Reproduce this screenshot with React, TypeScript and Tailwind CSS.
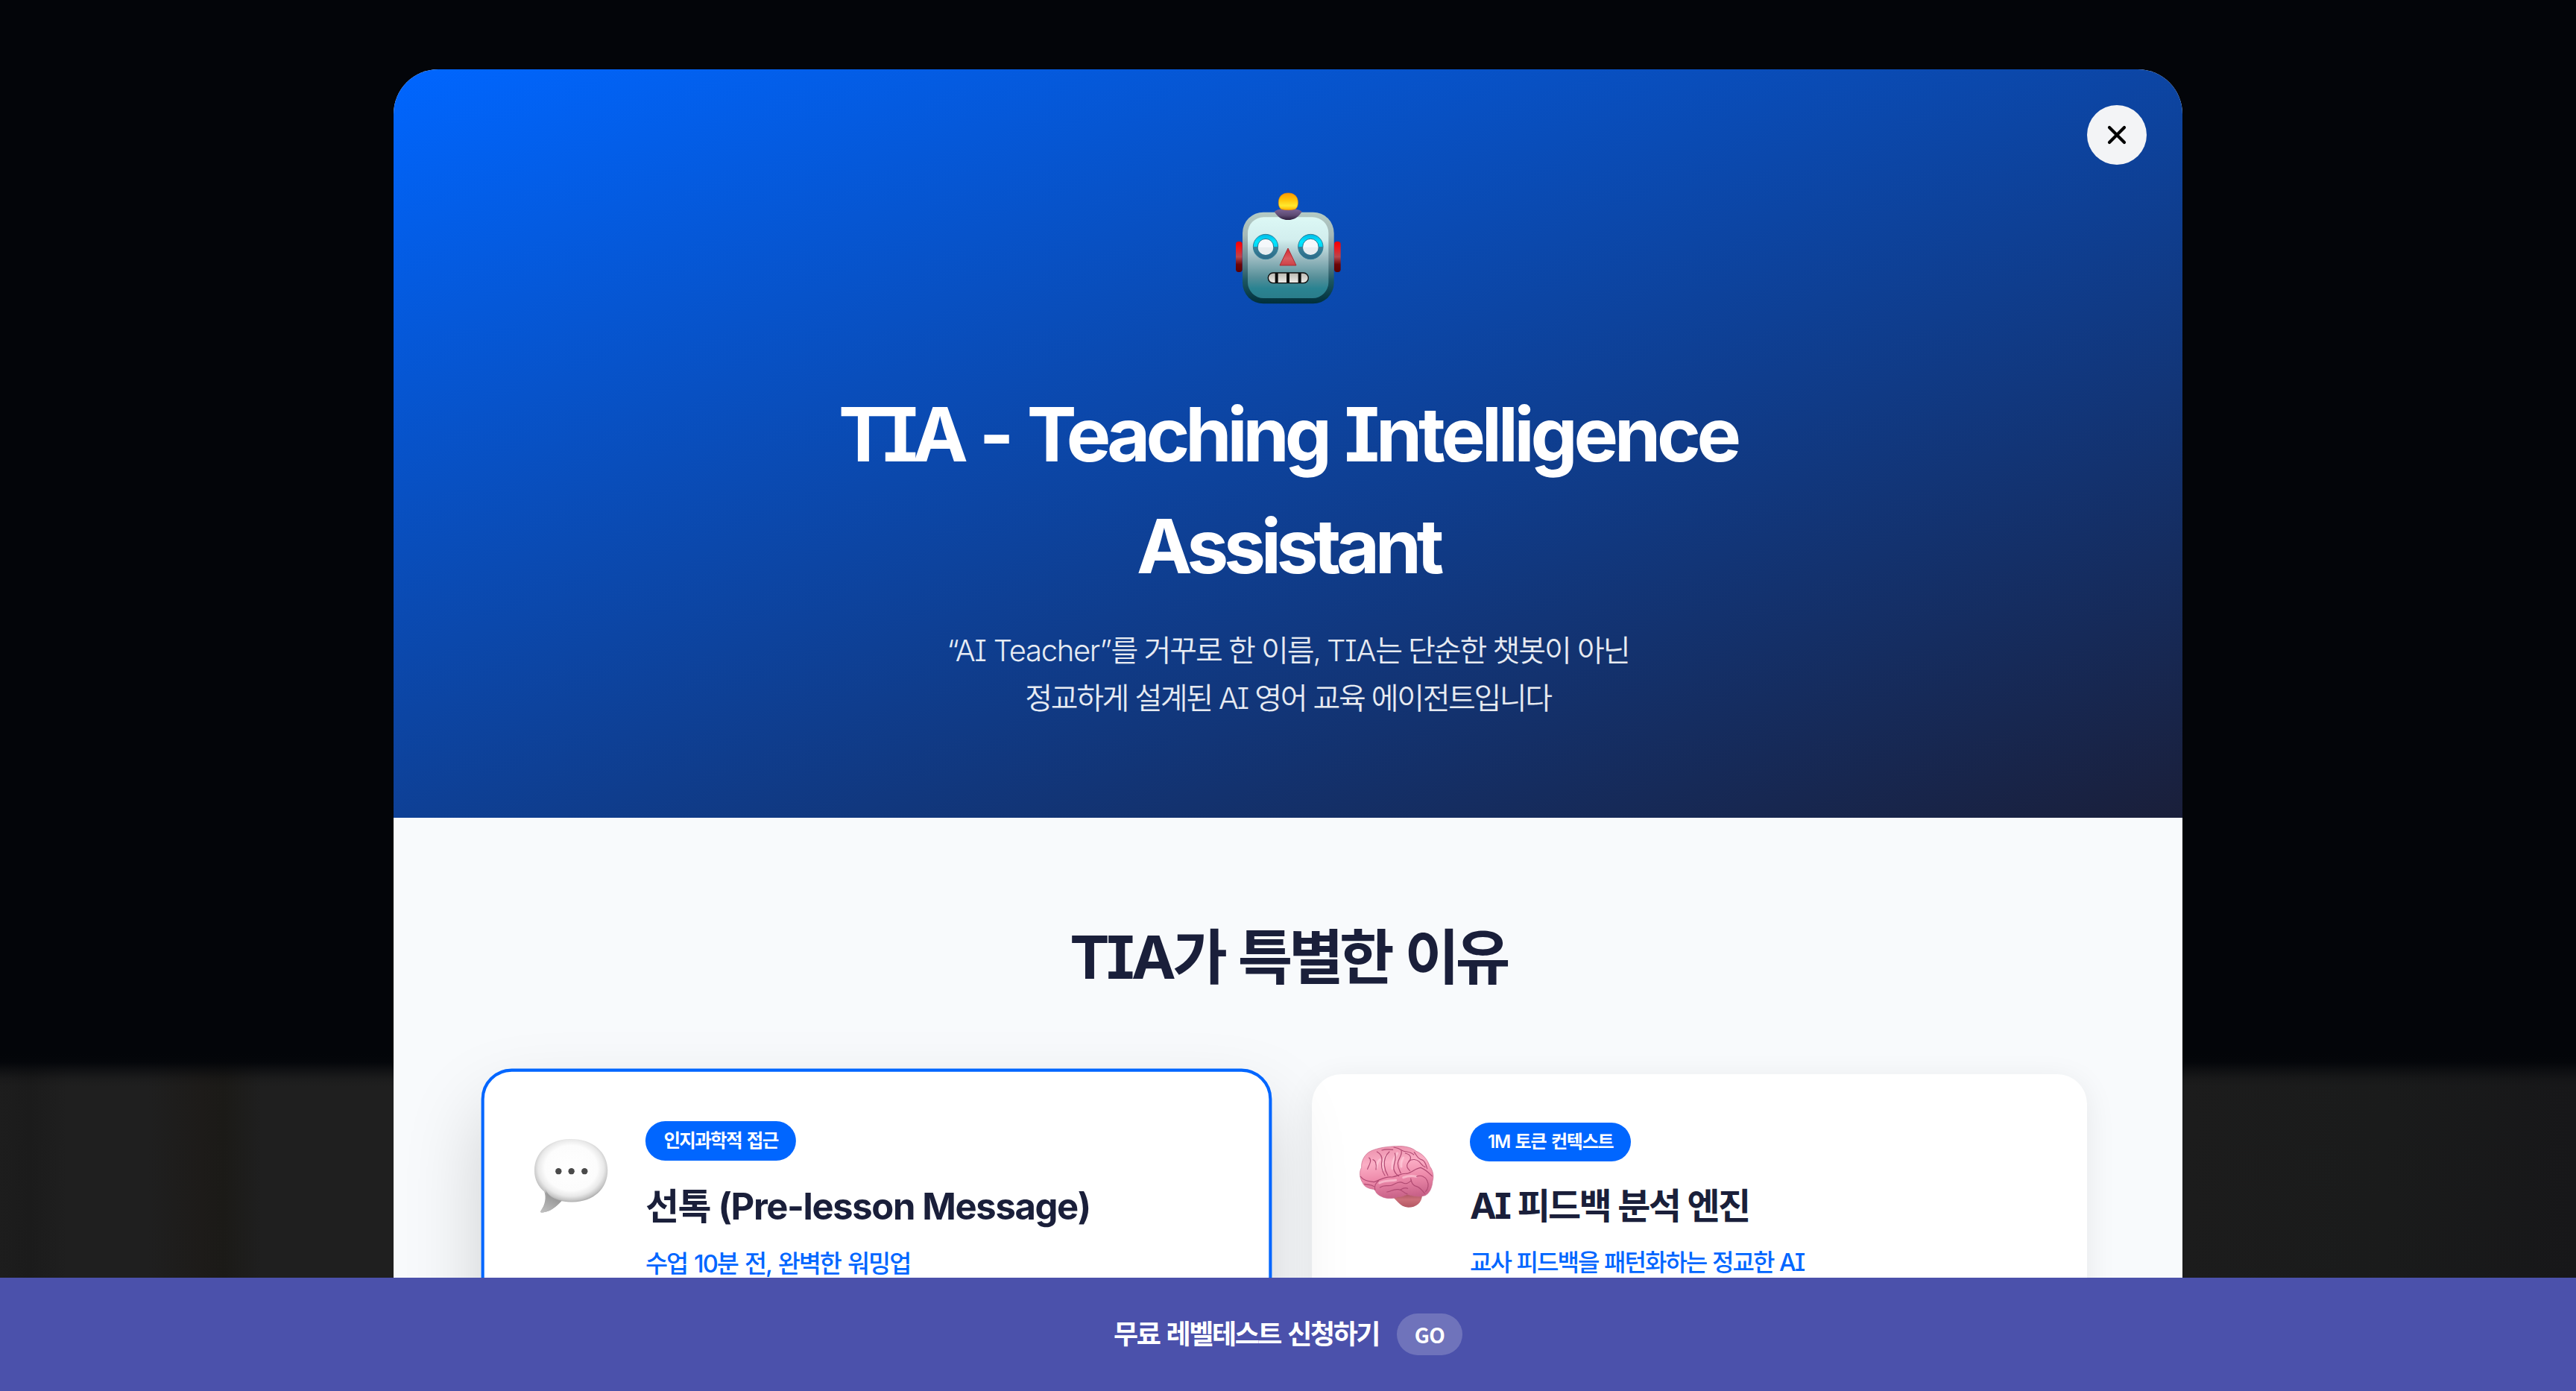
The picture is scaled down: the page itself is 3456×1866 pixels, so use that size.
import type { ReactNode } from "react";
import { X } from "lucide-react";

function RobotIcon() {
  return (
    <svg viewBox="0 0 600 570" className="h-[190px] w-[200px]" aria-hidden="true">
      <defs>
        <linearGradient id="rb-frame" x1="0" y1="0" x2="0" y2="1">
          <stop offset="0" stopColor="#b4cbc4" />
          <stop offset="0.25" stopColor="#a5b9b8" />
          <stop offset="0.5" stopColor="#6d8a92" />
          <stop offset="0.75" stopColor="#1b5560" />
          <stop offset="1" stopColor="#002f3a" />
        </linearGradient>
        <linearGradient id="rb-face" x1="0" y1="0" x2="0" y2="1">
          <stop offset="0" stopColor="#dcf8f5" />
          <stop offset="0.28" stopColor="#d2eeee" />
          <stop offset="0.5" stopColor="#9dbcc2" />
          <stop offset="0.75" stopColor="#548e98" />
          <stop offset="0.88" stopColor="#2a8391" />
          <stop offset="1" stopColor="#2a7d8b" />
        </linearGradient>
        <linearGradient id="rb-ear" x1="0" y1="0" x2="0" y2="1">
          <stop offset="0" stopColor="#f50000" />
          <stop offset="0.2" stopColor="#f0141a" />
          <stop offset="0.5" stopColor="#b8464c" />
          <stop offset="0.75" stopColor="#6b0508" />
          <stop offset="1" stopColor="#5c0000" />
        </linearGradient>
        <linearGradient id="rb-ball" x1="0" y1="0" x2="0" y2="1">
          <stop offset="0" stopColor="#ff9a00" />
          <stop offset="0.4" stopColor="#ffc40a" />
          <stop offset="0.75" stopColor="#ffe92e" />
          <stop offset="1" stopColor="#ffb300" />
        </linearGradient>
        <linearGradient id="rb-cap" x1="0" y1="0" x2="0" y2="1">
          <stop offset="0" stopColor="#7d6596" />
          <stop offset="0.6" stopColor="#5c4a72" />
          <stop offset="1" stopColor="#2c1c3c" />
        </linearGradient>
        <linearGradient id="rb-eye" x1="0" y1="0" x2="0" y2="1">
          <stop offset="0" stopColor="#00b8e6" />
          <stop offset="0.3" stopColor="#00e8ff" />
          <stop offset="0.5" stopColor="#00d5f5" />
          <stop offset="0.51" stopColor="#3a8299" />
          <stop offset="1" stopColor="#2c6a88" />
        </linearGradient>
        <linearGradient id="rb-nose" x1="0" y1="0" x2="0" y2="1">
          <stop offset="0" stopColor="#d9252d" />
          <stop offset="0.6" stopColor="#d85c60" />
          <stop offset="1" stopColor="#cf4046" />
        </linearGradient>
        <linearGradient id="rb-tooth" x1="0" y1="0" x2="0" y2="1">
          <stop offset="0" stopColor="#b9b7b0" />
          <stop offset="1" stopColor="#efeeea" />
        </linearGradient>
      </defs>
      <rect x="90" y="252" width="26" height="123" rx="11" fill="url(#rb-ear)" />
      <rect x="486" y="252" width="26" height="123" rx="11" fill="url(#rb-ear)" />
      <rect x="117" y="134" width="368" height="368" rx="84" fill="url(#rb-frame)" />
      <rect x="138" y="154" width="325" height="326" rx="64" fill="url(#rb-face)" />
      <path d="M245 131c16-11 35-11 55-11s40 0 56 11c-12 22-32 34-56 34s-43-12-55-34z" fill="url(#rb-cap)" />
      <path d="M262 95c0-24 15-38 39-38s39 14 39 38c0 14-5 25-13 27-16 4-36 4-52 0-8-2-13-13-13-27z" fill="url(#rb-ball)" stroke="#f08a00" strokeWidth="2" />
      {[210, 391].map((cx) => (
        <g key={cx}>
          <circle cx={cx} cy="273" r="50" fill="url(#rb-eye)" stroke="#2f7f98" strokeWidth="3" />
          <circle cx={cx} cy="273" r="32" fill="#f5f8fb" stroke="#1f7792" strokeWidth="3" />
          <path d={`M${cx - 31} 275a31 31 0 0 0 62 0z`} fill="#e8edf0" />
        </g>
      ))}
      <path d="M300 279l33 69h-66z" fill="url(#rb-nose)" stroke="#a92b31" strokeWidth="3" strokeLinejoin="round" />
      <rect x="220" y="378" width="162" height="41" rx="20.500" fill="url(#rb-tooth)" stroke="#0c0c0c" strokeWidth="4" />
      <path d="M254 378v41M300 378v41M347 378v41" stroke="#0c0c0c" strokeWidth="12" />
    </svg>
  );
}

function BubbleIcon() {
  return (
    <svg viewBox="27 0 306 360" className="mt-3 h-[117.6px] w-[100px] shrink-0" aria-hidden="true">
      <defs>
        <radialGradient id="bb-body" cx="0.5" cy="0.46" r="0.56">
          <stop offset="0" stopColor="#ffffff" />
          <stop offset="0.64" stopColor="#fcfcfc" />
          <stop offset="0.8" stopColor="#e9e9e9" />
          <stop offset="0.92" stopColor="#c4c4c4" />
          <stop offset="1" stopColor="#9c9c9c" />
        </radialGradient>
        <linearGradient id="bb-tail" x1="0.6" y1="0" x2="0.1" y2="1">
          <stop offset="0" stopColor="#9a9a9a" stopOpacity="0" />
          <stop offset="0.3" stopColor="#9a9a9a" />
          <stop offset="1" stopColor="#c0c0c0" />
        </linearGradient>
      </defs>
      <path d="M72 248c10 26 4 56-13 79-4 6 0 8 8 7 30-3 54-22 76-47z" fill="#a6a6a6" />
      <path d="M181 38c86 0 147 52 147 126 0 75-58 128-140 128-14 0-30-1-45-4-20-4-50-16-68-36-26-20-42-50-42-86C33 88 96 38 181 38z" fill="url(#bb-body)" />
      <path d="M76 240c10 28 4 62-17 87-4 6 0 8 8 7 30-3 54-22 76-47-30-6-50-16-67-47z" fill="url(#bb-tail)" />
      <g fill="#4a4a4a">
        <circle cx="130" cy="168" r="12.500" />
        <circle cx="182" cy="168" r="12.500" />
        <circle cx="235" cy="168" r="12.500" />
      </g>
    </svg>
  );
}

function BrainIcon() {
  return (
    <svg viewBox="30 0 300 315" className="mt-5 h-[105px] w-[100px] shrink-0" aria-hidden="true">
      <defs>
        <linearGradient id="br-body" x1="0.4" y1="0" x2="0.55" y2="1">
          <stop offset="0" stopColor="#ec93ae" />
          <stop offset="0.3" stopColor="#fbaec5" />
          <stop offset="0.6" stopColor="#ee8bab" />
          <stop offset="1" stopColor="#c65f86" />
        </linearGradient>
        <linearGradient id="br-stem" x1="0" y1="0" x2="0" y2="1">
          <stop offset="0" stopColor="#9c4656" />
          <stop offset="0.5" stopColor="#cc6f79" />
          <stop offset="1" stopColor="#b35763" />
        </linearGradient>
      </defs>
      <path d="M160 240c20 12 30 42 66 44 32 0 54-18 56-48l-60-16z" fill="url(#br-stem)" />
      <path d="M180 38c30-2 60 4 78 20 26 10 46 34 54 60 14 18 18 40 12 60-2 26-12 50-30 58-24 8-50 2-72-4-14 6-24 10-38 10-20 8-48 8-66-2-14-6-24-16-26-28-22-2-44-10-50-28-12-18-14-44-4-60-2-26 12-54 36-66 28-14 74-20 106-20z" fill="url(#br-body)" stroke="#c8688a" strokeWidth="2" />
      <g fill="none" stroke="#ffd3df" strokeWidth="9" strokeLinecap="round" opacity="0.6">
        <path d="M138 76c-14 16-16 36-14 58M182 66c-16 22-22 40-20 62M112 92c-8 8-14 20-14 32M206 84c-8 12-10 22-8 36M110 186c20-12 46-8 66-12M206 164c20-8 34-8 52-4" />
      </g>
      <g fill="none" stroke="#b04a72" strokeWidth="3.500" strokeLinecap="round" strokeLinejoin="round">
        <path d="M34 160c14 18 34 18 54 22 24-8 46-24 72-20 22-2 36-16 60-14 20-4 36-22 56-24 18 6 34 22 46 34" />
        <path d="M92 214c-2-16 0-26 14-36M50 190c14 4 26 0 38 10" />
        <path d="M68 84c14 10 0 30-6 46M100 60c14 8 22 20 20 36-4 14-2 40 12 60M84 92c14 4 14 24 12 40" />
        <path d="M150 60c-18 16-22 36-20 56s8 30 14 40M172 66c10 22-8 44-4 66 4 14 10 20 20 26" />
        <path d="M198 56c6 18-14 32-14 52 0 18 6 26 12 38M214 66c22 6 30 18 10 40-8 14 0 22 8 30" />
        <path d="M168 42c14 2 26 8 36 14 14 6 30 2 44 16M120 54c12-4 30-4 44-2M250 62c12 16 14 26 34 32 12 8 14 22 18 34M228 98c14-10 32-8 42 2 8 8 12 18 24 22" />
        <path d="M112 204c18-14 34-2 50-10s30-16 44-8c10 6 24-2 32-10M140 222c18-2 24-12 44-10 18-2 20 14 38 18M236 168c4 18 6 26 24 32 14 4 24 18 32 28M260 160c16-8 34 0 42 16s4 34-6 44M196 212c10-6 20-8 28-4" />
      </g>
    </svg>
  );
}

function Feature(props: {
  icon: ReactNode;
  badge: ReactNode;
  title: ReactNode;
  subtitle: ReactNode;
  className: string;
}) {
  return (
    <article className={`flex h-[738px] gap-12 rounded-[40px] bg-white p-16 whitespace-nowrap ${props.className}`}>
      {props.icon}
      <div className="flex flex-col items-start pt-px">
        <div className="rounded-[26px] bg-[#0066ff] px-6 py-2 text-[24px] leading-[36px] font-semibold text-white">
          {props.badge}
        </div>
        <h3 className="mt-6 text-[48px] leading-[72px] font-[650] text-[#1a1f3a]">{props.title}</h3>
        <p className="mt-4 text-[32px] leading-[48px] font-medium text-[#0066ff]">{props.subtitle}</p>
      </div>
    </article>
  );
}

export default function App() {
  return (
    <div className="relative flex h-[1866px] w-[3456px] flex-col overflow-hidden bg-[#030509] font-[Inter,'Noto_Sans_CJK_KR',sans-serif] [font-feature-settings:'cv08']">
      <div className="absolute inset-0 flex flex-col">
        <div className="h-[1414px] bg-[#030509]" />
        <div className="grow bg-[linear-gradient(to_right,#1d1d1d_0px,#1b1b1b_40px,#1f1f1f_90px,#1f1f1f_200px,#1d1b19_270px,#1b1a17_300px,#1f1f1f_350px,#1f1f1f_528px,#1c1c1c_2928px,#1a1b1b_3200px,#171719_3456px)]">
          <div className="h-[44px] bg-[linear-gradient(to_bottom,#030509_0%,#030509f0_25%,#03050980_50%,#03050920_75%,transparent_100%)]" />
        </div>
      </div>

      <main className="relative flex h-[1714px] justify-center overflow-hidden pt-[93px]">
        <section className="relative h-[1900px] w-[2400px] overflow-hidden rounded-[60px] bg-[#f8fafc]">
          <button
            aria-label="닫기"
            className="absolute top-12 right-12 flex size-20 items-center justify-center rounded-full bg-[#f3f4f6] text-black"
          >
            <X size={40} strokeWidth={2.5} />
          </button>

          <header className="flex h-[1004px] flex-col items-center bg-[linear-gradient(160deg,#0066ff_0%,#1a1f3a_100%)] pt-[147px] text-center text-white">
            <RobotIcon />
            <h1 className="mt-[78px] text-[100px] leading-[150px] font-bold">
              <span className="block tracking-[-5.2px] [word-spacing:4px]">
                <span className="tracking-[-7.6px]">TIA</span> - <span className="tracking-[-6px]">Teaching</span> Intelligence
              </span>
              <span className="block tracking-[-6.3px]">Assistant</span>
            </h1>
            <p className="mt-[33px] text-[40px] leading-[64px] font-[350] text-white/90">
              <span className="block tracking-[-2.05px]">
                <span className="tracking-[-1.3px]">“AI Teacher”</span>를 거꾸로 한 이름,{" "}
                <span className="tracking-[-1.3px]">TIA</span>는 단순한 챗봇이 아닌
              </span>
              <span className="block tracking-[-2.4px] [word-spacing:0.6px]">정교하게 설계된 AI 영어 교육 에이전트입니다</span>
            </p>
          </header>

          <div className="px-32 pt-[127px]">
            <h2 className="text-center text-[80px] leading-[120px] font-[650] tracking-[-5.5px] text-[#1a1f3a] [word-spacing:6px]">
              <span className="tracking-[-4.4px]">TIA</span>가 특별한 이유
            </h2>
            <div className="mt-[97px] grid grid-cols-2 gap-16">
              <Feature
                className="scale-[1.02] border-4 border-[#0066ff] shadow-[0_50px_100px_rgba(0,0,0,0.17)]"
                icon={<BubbleIcon />}
                badge={<span className="tracking-[-1.6px] [word-spacing:2.4px]">인지과학적 접근</span>}
                title={<span className="tracking-[-1.35px]">선톡 (Pre-lesson Message)</span>}
                subtitle={<span className="tracking-[-1.9px] [word-spacing:2.2px]">수업 10분 전, 완벽한 워밍업</span>}
              />
              <Feature
                className="shadow-[0_8px_40px_rgba(0,0,0,0.08)]"
                icon={<BrainIcon />}
                badge={<span className="tracking-[-1.2px] [word-spacing:1.8px]">1M 토큰 컨텍스트</span>}
                title={<span className="tracking-[-2.8px] [word-spacing:2px]">AI 피드백 분석 엔진</span>}
                subtitle={<span className="tracking-[-2px] [word-spacing:1.2px]">교사 피드백을 패턴화하는 정교한 AI</span>}
              />
            </div>
          </div>
        </section>
      </main>

      <footer className="relative flex h-[152px] items-center justify-center gap-6 bg-[#4b51ab] text-white">
        <span className="text-[36px] leading-[54px] font-bold tracking-[-2.4px] [word-spacing:3px]">무료 레벨테스트 신청하기</span>
        <span className="flex h-14 w-[88px] items-center justify-center rounded-full bg-white/20 font-['Noto_Sans_CJK_KR',sans-serif] text-[28px] leading-[56px] font-bold tracking-[-0.5px]">
          GO
        </span>
      </footer>
    </div>
  );
}
